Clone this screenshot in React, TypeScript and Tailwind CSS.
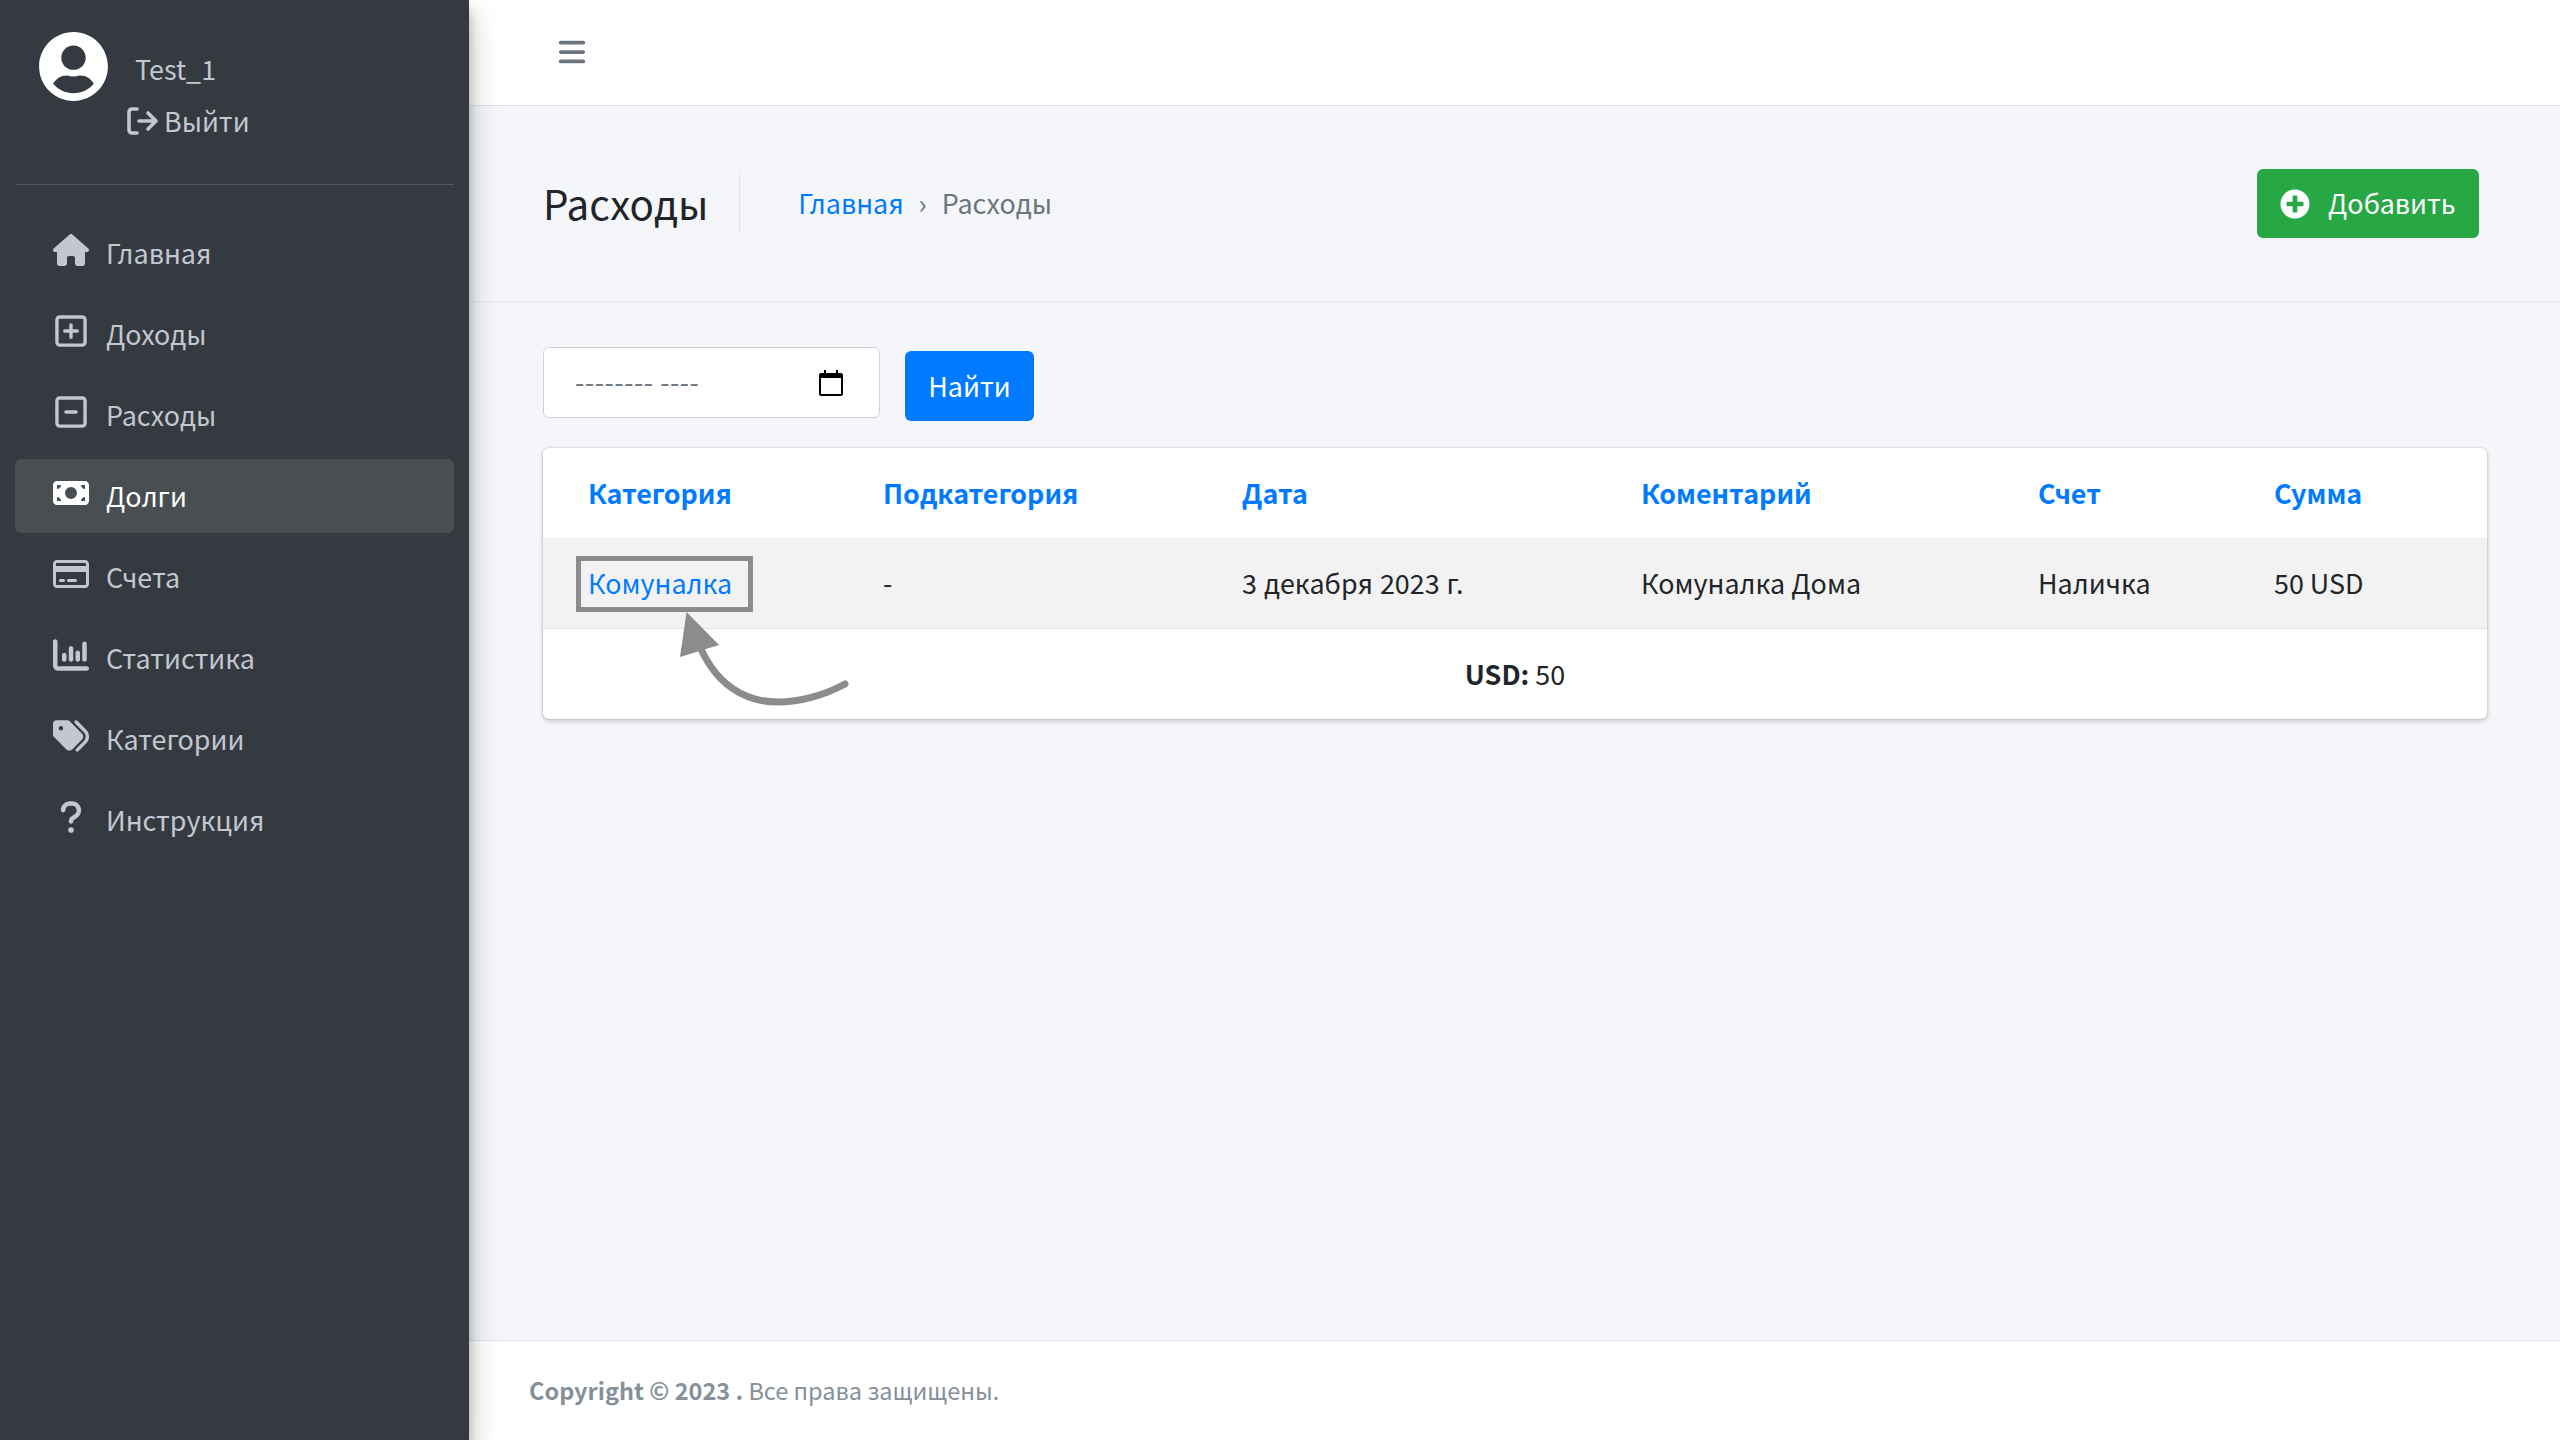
import { FaBars, FaChartColumn, FaHouse, FaMoneyBill, FaQuestion, FaRegCreditCard, FaRegSquareMinus, FaRegSquarePlus, FaTags } from "react-icons/fa6";
import { FaPlusCircle, FaUserCircle } from "react-icons/fa";
import type { IconType } from "react-icons";

const navItems: { label: string; icon: IconType; active?: boolean }[] = [
  { label: "Главная", icon: FaHouse },
  { label: "Доходы", icon: FaRegSquarePlus },
  { label: "Расходы", icon: FaRegSquareMinus },
  { label: "Долги", icon: FaMoneyBill, active: true },
  { label: "Счета", icon: FaRegCreditCard },
  { label: "Статистика", icon: FaChartColumn },
  { label: "Категории", icon: FaTags },
  { label: "Инструкция", icon: FaQuestion },
];

const columns = ["Категория", "Подкатегория", "Дата", "Коментарий", "Счет", "Сумма"];

function LogoutIcon() {
  return (
    <svg width="32" height="28" viewBox="0 0 32 28" fill="none" stroke="currentColor" strokeWidth="3.6" strokeLinecap="round" strokeLinejoin="round">
      <path d="M10 2H5a3 3 0 0 0-3 3v18a3 3 0 0 0 3 3h5" />
      <path d="M12 14h17M21 6l8 8-8 8" />
    </svg>
  );
}

function CalendarIcon() {
  return (
    <svg width="24" height="26" viewBox="0 0 24 26" className="text-black">
      <path d="M5 0h2v3h10V0h2v3h3a2 2 0 0 1 2 2v19a2 2 0 0 1-2 2H2a2 2 0 0 1-2-2V5a2 2 0 0 1 2-2h3zM2 8v16h20V8z" fill="currentColor" />
    </svg>
  );
}

export default function App() {
  return (
    <div className="flex min-h-screen bg-[#f4f6f9] text-[26.88px] text-[#212529] font-['Noto_Sans_CJK_SC','Source_Sans_Pro',sans-serif]">
      <aside className="relative z-10 w-[469px] shrink-0 bg-[#343a40] text-[#c2c7d0] shadow-[0_14px_28px_rgba(0,0,0,0.25),0_10px_10px_rgba(0,0,0,0.22)]">
        <div className="mx-[15px] h-[185px] border-b border-[#4f5962] pt-[31px] pl-[23px]">
          <div className="flex">
            <FaUserCircle className="text-[71px] text-white" />
            <span className="ml-[26px] mt-[16px] leading-[44px]">Test_1</span>
          </div>
          <div className="ml-[89px] mt-[-3px] flex items-center gap-[5px] leading-[44px]">
            <LogoutIcon />
            <span>Выйти</span>
          </div>
        </div>
        <nav className="mt-[31px] flex flex-col gap-[7px] px-[15px]">
          {navItems.map((item) => {
            const Icon = item.icon;
            return (
              <a
                key={item.label}
                className={`flex h-[74px] items-center rounded-[6px] ${item.active ? "bg-[#494e53] text-white" : ""}`}
              >
                <span className="mb-[6px] ml-[35px] mr-[15px] flex w-[41px] shrink-0 justify-center">
                  <Icon className="h-[36px] w-auto" />
                </span>
                <span>{item.label}</span>
              </a>
            );
          })}
        </nav>
      </aside>

      <div className="flex min-w-0 flex-1 flex-col">
        <header className="flex h-[106px] items-center border-b border-[#dee2e6] bg-white pb-[2px] pl-[88px]">
          <FaBars className="h-[30px] w-auto text-[#6c757d]" />
        </header>

        <section className="flex h-[196px] items-center border-b border-[#e4e7ec] pl-[74px] pr-[81px]">
          <h1 className="mt-[-2px] border-r border-[#dee2e6] pr-[31px] text-[40.32px] leading-[57px]">Расходы</h1>
          <div className="ml-[58px] flex items-center">
            <a className="text-[#007bff]">Главная</a>
            <span className="mx-[15px] text-[#6c757d]">›</span>
            <span className="text-[#6c757d]">Расходы</span>
          </div>
          <button className="ml-auto flex h-[69px] w-[222px] items-center rounded-[6px] bg-[#28a745] pl-[23px] text-white">
            <FaPlusCircle className="mr-[18px] text-[30px]" />
            Добавить
          </button>
        </section>

        <main className="flex-1 pt-[45px] pl-[74px] pr-[73px]">
          <div className="flex items-start">
            <div className="flex h-[71px] w-[337px] items-center justify-between rounded-[6px] border border-[#ced4da] bg-white pl-[31px] pr-[36px] text-[#6c757d]">
              <span className="whitespace-pre tracking-[0.5px]">-------- ----</span>
              <CalendarIcon />
            </div>
            <button className="ml-[25px] mt-[4px] h-[70px] w-[129px] rounded-[6px] bg-[#007bff] text-white">Найти</button>
          </div>

          <div className="relative mt-[27px] w-[1944px] rounded-[6px] bg-white shadow-[0_0_2px_rgba(0,0,0,0.2),0_2px_5px_rgba(0,0,0,0.2)]">
            <table className="w-full table-fixed border-collapse text-left">
              <colgroup>
                <col className="w-[294px]" />
                <col className="w-[359px]" />
                <col className="w-[399px]" />
                <col className="w-[397px]" />
                <col className="w-[236px]" />
                <col />
              </colgroup>
              <thead>
                <tr className="h-[90px]">
                  {columns.map((c, i) => (
                    <th key={c} className={`font-bold text-[#007bff] ${i === 0 ? "pl-[45px]" : "pl-[46px]"}`}>{c}</th>
                  ))}
                </tr>
              </thead>
              <tbody>
                <tr className="h-[90px] border-b border-[#dee2e6] bg-[#f2f2f2]">
                  <td className="pl-[45px] text-[#007bff]">Комуналка</td>
                  <td className="pl-[46px]">-</td>
                  <td className="pl-[46px] [word-spacing:1px]">3 декабря 2023 г.</td>
                  <td className="pl-[46px]">Комуналка Дома</td>
                  <td className="pl-[46px]">Наличка</td>
                  <td className="pl-[46px]">50 USD</td>
                </tr>
                <tr className="h-[91px]">
                  <td colSpan={6} className="text-center"><b>USD:</b> 50</td>
                </tr>
              </tbody>
            </table>
            {/* annotation drawn over the screenshot */}
            <div className="absolute left-[33px] top-[108px] h-[56px] w-[177px] rounded-[1px] border-[5px] border-[#8c8c8c]" />
            <svg className="absolute left-[127px] top-[152px]" width="185" height="115" viewBox="0 0 185 115" fill="none">
              <path d="M16.5 12L10 57L49 45Z" fill="#8c8c8c" />
              <path d="M28 42C45 85 75 102 108 102C130 102 155 95 175 84" stroke="#8c8c8c" strokeWidth="7" strokeLinecap="round" />
            </svg>
          </div>
        </main>

        <footer className="flex h-[100px] items-center border-t border-[#dee2e6] bg-white pl-[60px] text-[23.52px] text-[#869099]">
          <b>Copyright © 2023 .</b>&nbsp;Все права защищены.
        </footer>
      </div>
    </div>
  );
}
